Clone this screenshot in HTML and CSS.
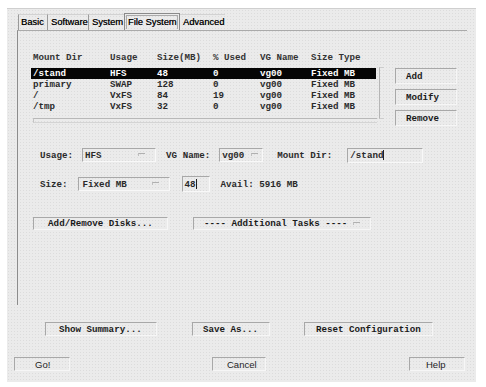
FILE: index.html
```html
<!DOCTYPE html>
<html>
<head>
<meta charset="utf-8">
<link rel="stylesheet" href="styles.css">
</head>
<body>
<div class="window">
  <div class="tabs">
    <div class="tab t-basic">Basic</div>
    <div class="tab t-soft">Software</div>
    <div class="tab t-sys">System</div>
    <div class="tab t-fs active"><span>File System</span></div>
    <div class="tab t-adv">Advanced</div>
  </div>
  <div class="panel">
    <div class="list-row">
      <div class="list">
        <div class="lrow head"><span>Mount Dir</span><span>Usage</span><span>Size(MB)</span><span>% Used</span><span>VG Name</span><span>Size Type</span></div>
        <div class="rows">
          <div class="lrow sel"><span>/stand</span><span>HFS</span><span>48</span><span>0</span><span>vg00</span><span>Fixed MB</span></div>
          <div class="lrow"><span>primary</span><span>SWAP</span><span>128</span><span>0</span><span>vg00</span><span>Fixed MB</span></div>
          <div class="lrow"><span>/</span><span>VxFS</span><span>84</span><span>19</span><span>vg00</span><span>Fixed MB</span></div>
          <div class="lrow"><span>/tmp</span><span>VxFS</span><span>32</span><span>0</span><span>vg00</span><span>Fixed MB</span></div>
          <div class="vscroll"></div>
        </div>
        <div class="hscroll"></div>
      </div>
      <div class="side-buttons">
        <div class="btn side">Add</div>
        <div class="btn side">Modify</div>
        <div class="btn side">Remove</div>
      </div>
    </div>

    <div class="form-row r1">
      <span class="lbl l-usage">Usage:</span>
      <div class="field opt f-usage">HFS<i class="ind"></i></div>
      <span class="lbl l-vg">VG Name:</span>
      <div class="field opt f-vg">vg00<i class="ind"></i></div>
      <span class="lbl l-md">Mount Dir:</span>
      <div class="field f-md">/stand<i class="caret"></i></div>
    </div>

    <div class="form-row r2">
      <span class="lbl l-size">Size:</span>
      <div class="field opt f-size">Fixed MB<i class="ind"></i></div>
      <div class="field f-num">48<i class="caret"></i></div>
      <span class="lbl l-avail">Avail: 5916 MB</span>
    </div>

    <div class="form-row r3">
      <div class="btn b-disks">Add/Remove Disks...</div>
      <div class="btn opt b-tasks">---- Additional Tasks ----<i class="ind"></i></div>
    </div>
  </div>

  <div class="bottom-row">
    <div class="btn b-sum">Show Summary...</div>
    <div class="btn b-save">Save As...</div>
    <div class="btn b-reset">Reset Configuration</div>
  </div>

  <div class="action-row">
    <div class="btn act b-go">Go!</div>
    <div class="btn act b-cancel">Cancel</div>
    <div class="btn act b-help">Help</div>
  </div>
</div>
</body>
</html>
```

FILE: styles.css
```css
html, body {
  margin: 0;
  padding: 0;
  background: #ffffff;
}
body {
  width: 486px;
  height: 387px;
  overflow: hidden;
}
.window {
  box-sizing: border-box;
  margin: 8px 0 0 7px;
  width: 469px;
  height: 374px;
  background-color: #ebebeb;
  background-image: radial-gradient(#dcdcdc 0.6px, transparent 0.7px);
  background-size: 3px 3px;
  border-top: 1px solid #cfcfcf;
  font-family: "Liberation Mono", "DejaVu Sans Mono", monospace;
  font-size: 9.2px;
  font-weight: bold;
  color: #2a2a2a;
}

/* tabs */
.tabs {
  display: flex;
  margin: 5px 0 0 11px;
  height: 16px;
  align-items: flex-end;
}
.tab {
  box-sizing: border-box;
  flex-shrink: 0;
  white-space: nowrap;
  height: 16px;
  font-family: "Liberation Sans", Arial, sans-serif;
  font-weight: normal;
  font-size: 9.3px;
  color: #000;
  line-height: 15px;
  border-left: 1px solid #9a9a9a;
  border-top: 1px solid #d2d2d2;
  padding-left: 2px;
  text-shadow: 0.3px 0 0 #444;
}
.t-basic { width: 29px; }
.t-soft { width: 41px; padding-left: 3px; }
.t-sys { width: 36px; padding-left: 3px; }
.t-fs {
  width: 56px;
  height: 17px;
  border: 1px solid #8a8a8a;
  border-bottom: none;
  padding: 1px 1px 0 1px;
}
.t-fs span {
  display: block;
  border: 1px solid #aaa;
  border-bottom: none;
  line-height: 13px;
  padding-left: 1px;
}
.t-adv { width: 45px; padding-left: 3px; border-left: none; }

/* panel */
.panel {
  box-sizing: border-box;
  margin-left: 10px;
  width: 450px;
  height: 275px;
  border-top: 1px solid #aaaaaa;
  border-left: 1px solid #8c8c8c;
}
.list-row {
  display: flex;
  padding-top: 21px;
}
.list {
  margin-left: 13px;
  width: 350px;
}
.lrow {
  display: grid;
  grid-template-columns: 77px 47px 56px 47px 51px 1fr;
  height: 11px;
  line-height: 11px;
  padding-left: 2px;
  width: 345px;
  box-sizing: border-box;
  white-space: pre;
}
.lrow.head {
  margin-bottom: 5px;
  color: #333;
}
.rows {
  position: relative;
}
.lrow.sel {
  background: #050505;
  color: #ffffff;
}
.vscroll {
  position: absolute;
  left: 348px;
  top: -1px;
  width: 4px;
  height: 50px;
  border-left: 1px solid #b5b5b5;
  border-top: 1px solid #ccc;
  border-bottom: 1px solid #ccc;
}
.hscroll {
  margin: 6px 0 0 2px;
  width: 343px;
  height: 3px;
  border-top: 1px solid #b8b8b8;
  border-left: 1px solid #c4c4c4;
  border-bottom: 1px solid #d4d4d4;
}
.side-buttons {
  display: flex;
  flex-direction: column;
  gap: 5px;
  margin-left: 14px;
  margin-top: 16px;
}
.btn {
  box-sizing: border-box;
  border-top: 1px solid #a8a8a8;
  border-left: 1px solid #a8a8a8;
  border-right: 1px solid #f6f6f6;
  border-bottom: 1px solid #f6f6f6;
  color: #1a1a1a;
  white-space: pre;
}
.btn.side {
  width: 62px;
  height: 16px;
  line-height: 15px;
  padding-left: 10px;
}

/* form */
.form-row {
  display: flex;
  align-items: center;
  position: relative;
}
.lbl { white-space: pre; }
.field {
  box-sizing: border-box;
  position: relative;
  height: 14px;
  line-height: 13px;
  border-top: 1px solid #a8a8a8;
  border-left: 1px solid #a8a8a8;
  border-right: 1px solid #f8f8f8;
  border-bottom: 1px solid #f8f8f8;
  padding-left: 2px;
  white-space: pre;
}
.ind {
  position: absolute;
  right: 10px;
  top: 4px;
  width: 6px;
  height: 2px;
  border-top: 1px solid #b0b0b0;
  border-left: 1px solid #c0c0c0;
}
.caret {
  display: inline-block;
  width: 1px;
  height: 10px;
  background: #222;
  vertical-align: -2px;
}
.r1 { margin-top: 21px; height: 16px; }
.l-usage { margin-left: 22px; }
.f-usage { margin-left: 9px; width: 74px; }
.l-vg { margin-left: 10px; }
.f-vg { margin-left: 9px; width: 44px; }
.f-vg .ind { right: 4px; }
.l-md { margin-left: 14px; }
.f-md { margin-left: 15px; width: 76px; height: 15px; }

.r2 { margin-top: 13px; height: 16px; }
.l-size { margin-left: 22px; }
.f-size { margin-left: 10px; width: 92px; padding-left: 4px; }
.f-num { margin-left: 12px; width: 28px; height: 16px; line-height: 15px; }
.l-avail { margin-left: 11px; }

.r3 { margin-top: 25px; height: 14px; align-items: flex-start; }
.b-disks {
  margin-left: 15px;
  width: 135px;
  height: 13px;
  line-height: 12px;
  text-align: center;
}
.b-tasks {
  position: relative;
  margin-left: 25px;
  width: 178px;
  height: 13px;
  line-height: 12px;
  padding-left: 10px;
}

/* bottom */
.bottom-row {
  display: flex;
  margin-top: 17px;
  height: 14px;
}
.bottom-row .btn {
  height: 14px;
  line-height: 13px;
}
.b-sum { margin-left: 38px; width: 112px; padding-left: 13px; }
.b-save { margin-left: 35px; width: 78px; padding-left: 10px; }
.b-reset { margin-left: 34px; width: 129px; padding-left: 11px; }

.action-row {
  display: flex;
  margin-top: 21px;
  height: 14px;
}
.btn.act {
  height: 14px;
  line-height: 13px;
  font-family: "Liberation Sans", Arial, sans-serif;
  font-weight: normal;
  font-size: 9.5px;
  color: #1e1e1e;
}
.b-go { margin-left: 7px; width: 56px; padding-left: 20px; }
.b-cancel { margin-left: 142px; width: 54px; padding-left: 14px; }
.b-help { margin-left: 143px; width: 56px; padding-left: 16px; }
```
